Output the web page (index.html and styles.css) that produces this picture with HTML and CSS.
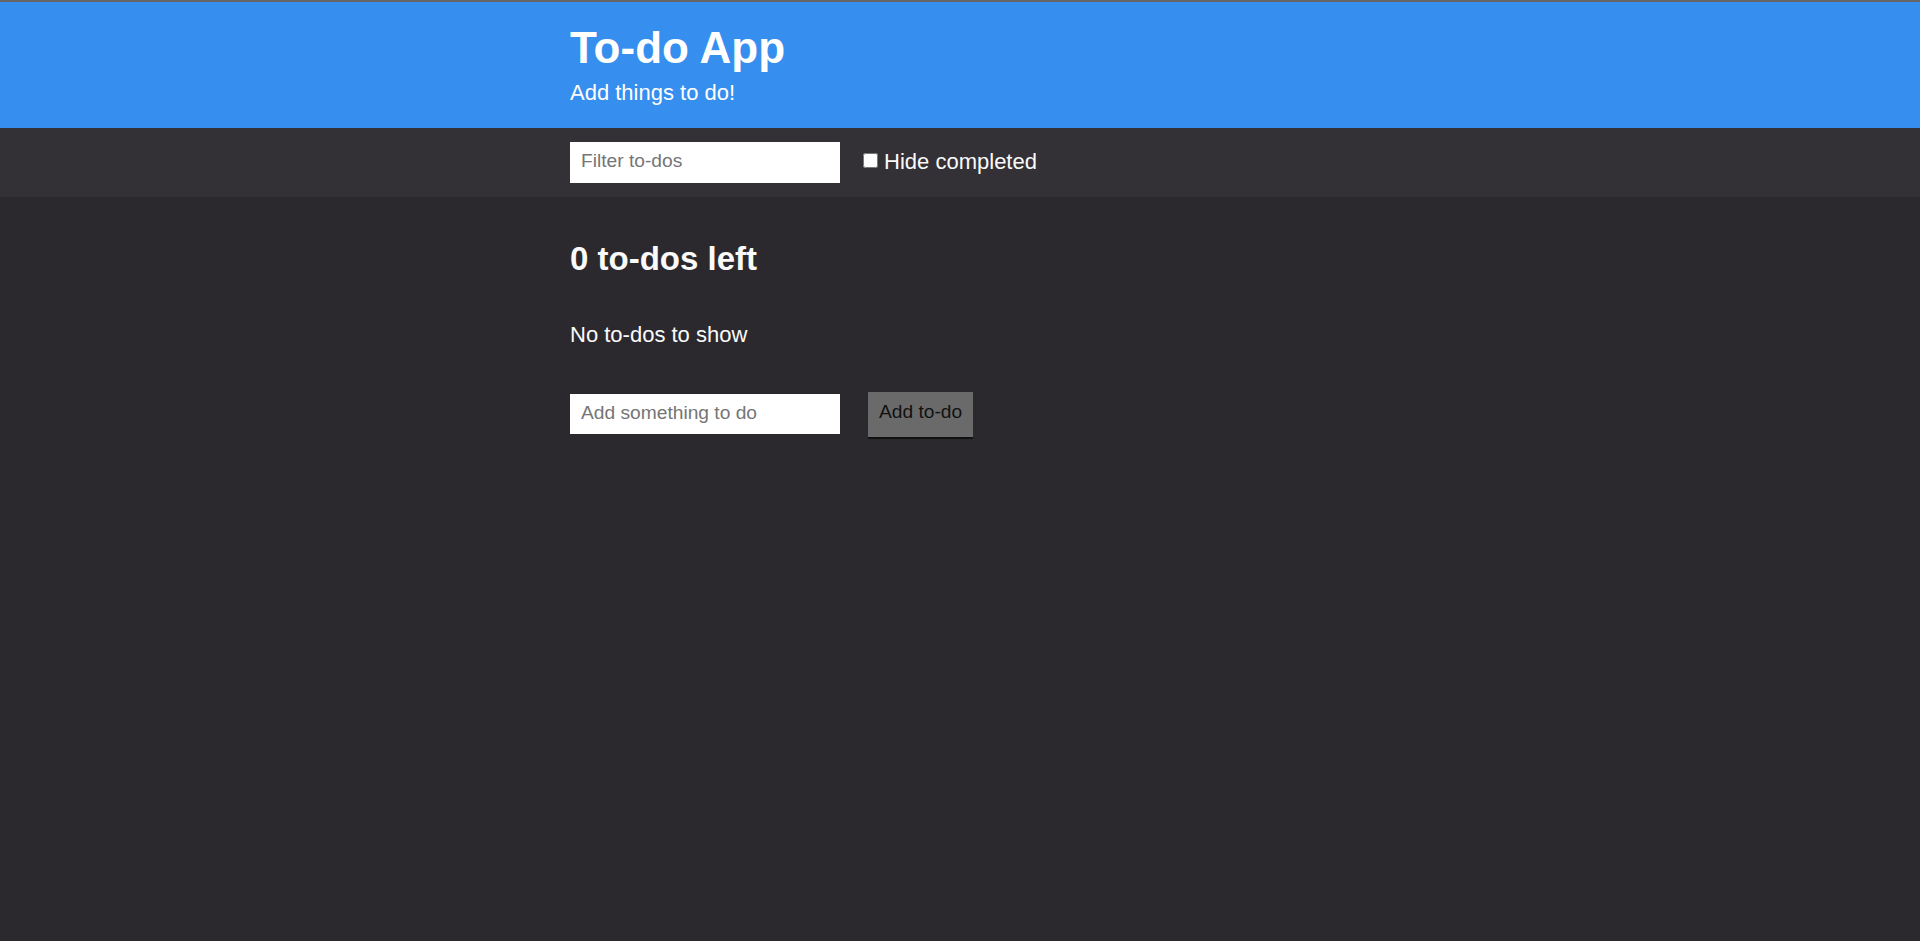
FILE: index.html
```html
<!DOCTYPE html>
<html lang="en">
<head>
<meta charset="utf-8">
<title>To-do App</title>
<link rel="stylesheet" href="styles.css">
</head>
<body>
  <header class="header">
    <div class="container">
      <h1 class="header__title">To-do App</h1>
      <p class="header__subtitle">Add things to do!</p>
    </div>
  </header>
  <div class="actions">
    <div class="container actions__row">
      <input class="input input--filter" type="text" placeholder="Filter to-dos">
      <label class="checkbox"><input class="checkbox__box" type="checkbox">Hide completed</label>
    </div>
  </div>
  <main class="container main">
    <h2 class="summary">0 to-dos left</h2>
    <p class="empty">No to-dos to show</p>
    <form class="add-form">
      <input class="input input--add" type="text" placeholder="Add something to do">
      <button class="button" type="button">Add to-do</button>
    </form>
  </main>
</body>
</html>
```
FILE: styles.css
```css
html, body {
  margin: 0;
  padding: 0;
}

body {
  background: #2c292e;
  color: #fafafa;
  font-family: "Liberation Sans", Arial, Helvetica, sans-serif;
  font-size: 22px;
  min-height: 941px;
}

.container {
  width: 780px;
  margin: 0 auto;
}

.header {
  background: #368eee;
  border-top: 2px solid #666;
  padding: 20.7px 0 21.8px;
  color: #ffffff;
}

.header__title {
  margin: 0;
  font-size: 44px;
  font-weight: bold;
  line-height: normal;
}

.header__subtitle {
  margin: 7.2px 0 0;
  font-size: 22px;
  line-height: normal;
}

.actions {
  background: #333036;
  padding: 14px 0;
}

.actions__row {
  display: flex;
  align-items: center;
}

.input {
  width: 270px;
  box-sizing: border-box;
  border: none;
  outline: none;
  margin: 0;
  background: #ffffff;
  font-family: "Liberation Sans", Arial, Helvetica, sans-serif;
  font-size: 19.2px;
  line-height: 22px;
  color: #222;
}

.input::placeholder {
  color: #757575;
}

.input--filter {
  height: 41px;
  padding: 8.5px 11px 10.5px;
}

.input--add {
  height: 40px;
  padding: 8px 11px 10px;
}

.checkbox {
  display: flex;
  align-items: center;
  margin-left: 22.5px;
  font-size: 22px;
  line-height: normal;
  color: #fafafa;
}

.checkbox__box {
  width: 15.6px;
  height: 15.6px;
  margin: 0 6px 3px 0;
}

.main {
  padding-top: 43.2px;
}

.summary {
  margin: 0;
  font-size: 33px;
  font-weight: bold;
  line-height: normal;
}

.empty {
  margin: 44.4px 0 0;
  line-height: normal;
}

.add-form {
  display: flex;
  align-items: flex-start;
  gap: 28px;
  margin-top: 44.2px;
}

.add-form .input {
  margin-top: 1.7px;
}

.button {
  background: #6a6a6a;
  color: #111;
  border: none;
  border-bottom: 2px solid #111;
  font-family: "Liberation Sans", Arial, Helvetica, sans-serif;
  font-size: 19.2px;
  line-height: 22px;
  padding: 9px 11px 13.4px;
  margin: 0;
  cursor: pointer;
}
```
